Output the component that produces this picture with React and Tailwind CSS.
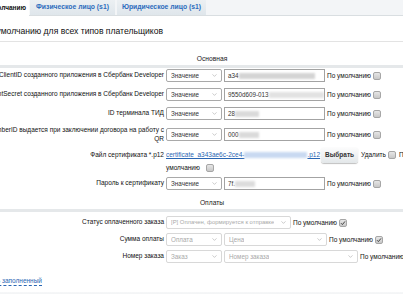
import React from "react";
import { ChevronDown } from "lucide-react";

function Select({ w, text, disabled = false, size = "text-[6.3px]" }) {
  return (
    <div
      className={`h-[13px] ${w} shrink-0 flex items-center justify-between pl-[4px] pr-[3px] rounded-[2px] border bg-white ${
        disabled ? "border-[#d8d8d8] text-[#a9a9a9]" : "border-[#a9a9a9] text-[#333]"
      }`}
    >
      <span className={`${size} whitespace-nowrap overflow-hidden`}>{text}</span>
      <ChevronDown size={7} strokeWidth={1.5} className="shrink-0 text-[#8a8a8a]" />
    </div>
  );
}

function Blur({ w, color = "bg-[#d4d4d4]" }) {
  return <span className={`inline-block h-[6px] ${w} ${color} blur-[1px]`} />;
}

function Input({ w, text, blur }) {
  return (
    <div className={`h-[13px] ${w} shrink-0 flex items-center pl-[3px] border border-[#a3a3a3] bg-white text-[6.3px] text-[#333] whitespace-nowrap overflow-hidden`}>
      <span>{text}</span>
      {blur}
    </div>
  );
}

function Check({ checked = false }) {
  return (
    <span className="w-[8px] h-[8px] shrink-0 rounded-[2px] border border-[#a6a6a6] bg-linear-to-b from-[#e6e6e6] to-[#c8c8c8] flex items-center justify-center">
      {checked && (
        <svg width="6" height="6" viewBox="0 0 6 6">
          <path d="M1 3.2 L2.4 4.6 L5 1.4" fill="none" stroke="#444" strokeWidth="1" />
        </svg>
      )}
    </span>
  );
}

function Default({ checked }) {
  return (
    <div className="flex items-center gap-[2px] whitespace-nowrap text-[6.5px] text-[#111]">
      <span>По умолчанию</span>
      <Check checked={checked} />
    </div>
  );
}

function Row({ label, children, className = "", align = "items-center", labelPad = "" }) {
  return (
    <div className={`grid grid-cols-[189px_1fr] ${align} ${className}`}>
      <div className={`flex justify-end pr-[2px] ${labelPad}`}>
        <div className="text-right whitespace-nowrap leading-[8.5px] text-[6.5px] text-[#111]">{label}</div>
      </div>
      <div className="flex items-center gap-[2px]">{children}</div>
    </div>
  );
}

function Section({ title, className = "" }) {
  return (
    <div className={className}>
      <div className="text-center leading-[8px] text-[6.7px] text-[#222]">{title}</div>
      <div className="h-[3px] bg-[#e5e8ea] mt-[2px]" />
    </div>
  );
}

export default function App() {
  return (
    <div className="w-[403px] h-[294px] overflow-hidden bg-white font-['Liberation_Sans',Arial,sans-serif] text-[#222]">
      {/* Tabs */}
      <div className="flex h-[16px] bg-[#f3f5f7] border-b border-[#d9dee1]">
        <div className="w-[29px] h-[16px] flex items-center justify-end pr-[3px] bg-white font-bold text-[6.5px] text-[#111] whitespace-nowrap">
          По умолчанию
        </div>
        <div className="w-[86px] h-[15px] flex items-center justify-center bg-linear-to-b from-[#ecf0f3] to-[#dfe6eb] border-l border-[#f7f9fa] font-bold text-[6.8px] text-[#2d6cbd] whitespace-nowrap">
          Физическое лицо (s1)
        </div>
        <div className="w-[89px] ml-[2px] h-[15px] flex items-center justify-center bg-linear-to-b from-[#ecf0f3] to-[#dfe6eb] font-bold text-[6.8px] text-[#2d6cbd] whitespace-nowrap">
          Юридическое лицо (s1)
        </div>
      </div>

      {/* Title */}
      <div className="h-[26px] pt-[5px] border-b border-[#e3e3e3] flex items-center">
        <div className="w-[163px] flex justify-end">
          <span className="whitespace-nowrap text-[8.6px] text-[#111]">По умолчанию для всех типов плательщиков</span>
        </div>
      </div>

      {/* Form */}
      <div className="-ml-[23px] w-[470px]">
        <Section title="Основная" className="pt-[13px]" />

        <Row label="ClientID созданного приложения в Сбербанк Developer" className="mt-[1px]">
          <Select w="w-[56px]" text="Значение" />
          <Input w="w-[101px]" text="a34" blur={<Blur w="w-[76px]" />} />
          <Default />
        </Row>

        <Row label="ClientSecret созданного приложения в Сбербанк Developer" className="mt-[6px]">
          <Select w="w-[56px]" text="Значение" />
          <Input w="w-[101px]" text="9550d609-013" blur={<Blur w="w-[55px]" color="bg-[#e2e2e2]" />} />
          <Default />
        </Row>

        <Row label="ID терминала ТИД" className="mt-[6px]">
          <Select w="w-[56px]" text="Значение" />
          <Input w="w-[101px]" text="28" blur={<Blur w="w-[24px]" color="bg-[#dadada]" />} />
          <Default />
        </Row>

        <Row
          label={
            <>
              MemberID выдается при заключении договора на работу с
              <br />
              QR
            </>
          }
          className="mt-[6px]"
        >
          <Select w="w-[56px]" text="Значение" />
          <Input w="w-[101px]" text="000" blur={<Blur w="w-[20px]" color="bg-[#dadada]" />} />
          <Default />
        </Row>

        <Row label="Файл сертификата *.p12" className="mt-[4px]" align="items-start" labelPad="pt-[4px]">
          <div className="flex flex-col">
            <div className="h-[16px] flex items-center whitespace-nowrap text-[6.5px]">
              <span className="text-[#2a66b3] underline">certificate_a343ae6c-2ce4-</span>
              <Blur w="w-[63px]" color="bg-[#c9d9f1]" />
              <span className="text-[#2a66b3] underline">.p12</span>
              <div className="ml-[1px] h-[16px] w-[37px] flex items-center justify-center rounded-[3px] bg-linear-to-b from-[#fdfdfd] to-[#e3e7e9] shadow-[0_1px_1px_rgba(0,0,0,0.25)] text-[6.5px] font-bold text-[#333]">
                Выбрать
              </div>
              <span className="ml-[3px] text-[#111]">Удалить</span>
              <span className="ml-[2px]">
                <Check />
              </span>
              <span className="ml-[3px] text-[#111]">По</span>
            </div>
            <div className="h-[9px] flex items-center gap-[6px] whitespace-nowrap text-[6.5px] text-[#111]">
              <span>умолчанию</span>
              <Check />
            </div>
          </div>
        </Row>

        <Row label="Пароль к сертификату" className="mt-[5px]">
          <Select w="w-[56px]" text="Значение" />
          <Input w="w-[101px]" text="7f." blur={<Blur w="w-[20px]" color="bg-[#dcdcdc]" />} />
          <Default />
        </Row>

        <Section title="Оплаты" className="pt-[9px]" />

        <Row label="Статус оплаченного заказа" className="mt-[4px]">
          <Select w="w-[125px]" text="[P] Оплачен, формируется к отправке" size="text-[5.9px]" disabled />
          <Default checked />
        </Row>

        <Row label="Сумма оплаты" className="mt-[4px]">
          <Select w="w-[56px]" text="Оплата" disabled />
          <Select w="w-[103px]" text="Цена" disabled />
          <Default checked />
        </Row>

        <Row label="Номер заказа" className="mt-[4px]">
          <Select w="w-[56px]" text="Заказ" disabled />
          <Select w="w-[134px]" text="Номер заказа" disabled />
          <Default />
        </Row>
      </div>

      {/* Bottom link */}
      <div className="mt-[14px] w-[42px] flex justify-end">
        <span className="whitespace-nowrap leading-[8px] text-[6.5px] text-[#2a66b3] border-b border-dashed border-[#2a66b3]">
          Скрыть заполненный
        </span>
      </div>

      <div className="mt-[6px] h-[6px] bg-linear-to-b from-[#f6f7f8] to-[#eceef0]" />
    </div>
  );
}
